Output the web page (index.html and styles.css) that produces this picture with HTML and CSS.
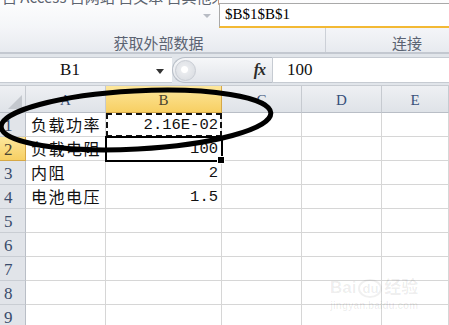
FILE: index.html
```html
<!DOCTYPE html>
<html>
  <head>
    <link rel="stylesheet" href="styles.css">
  </head>
  <body>
    <div class="ribbon">
      <div class="rb-top">
        <div class="rb-left">
          <div class="cut">自 Access 自网站 自文本 自其他来源</div>
          <span class="more"></span>
        </div>
        <div class="refbox">$B$1$B$1</div>
      </div>
      <div class="rb-groups">
        <div class="grp g1">获取外部数据</div>
        <div class="grp g2">连接</div>
      </div>
    </div>

    <div class="fbar">
      <div class="namebox"><span>B1</span><i class="caret"></i></div>
      <div class="fxbtn"><span class="knob"></span><span class="fx">fx</span></div>
      <div class="finput">100</div>
    </div>

    <div class="sheet">
      <div class="hd corner"><i></i></div>
      <div class="hd">A</div>
      <div class="hd sel">B</div>
      <div class="hd">C</div>
      <div class="hd">D</div>
      <div class="hd">E</div>

      <div class="rh">1</div>
      <div class="c txt">负载功率</div>
      <div class="c num ants">2.16E-02</div>
      <div class="c"></div><div class="c"></div><div class="c"></div>

      <div class="rh sel">2</div>
      <div class="c txt">负载电阻</div>
      <div class="c num active">100</div>
      <div class="c"></div><div class="c"></div><div class="c"></div>

      <div class="rh">3</div>
      <div class="c txt">内阻</div>
      <div class="c num">2</div>
      <div class="c"></div><div class="c"></div><div class="c"></div>

      <div class="rh">4</div>
      <div class="c txt">电池电压</div>
      <div class="c num">1.5</div>
      <div class="c"></div><div class="c"></div><div class="c"></div>

      <div class="rh">5</div>
      <div class="c"></div><div class="c"></div><div class="c"></div><div class="c"></div><div class="c"></div>
      <div class="rh">6</div>
      <div class="c"></div><div class="c"></div><div class="c"></div><div class="c"></div><div class="c"></div>
      <div class="rh">7</div>
      <div class="c"></div><div class="c"></div><div class="c"></div><div class="c"></div><div class="c"></div>
      <div class="rh">8</div>
      <div class="c"></div><div class="c"></div><div class="c"></div><div class="c"></div><div class="c"></div>
      <div class="rh">9</div>
      <div class="c"></div><div class="c"></div><div class="c"></div><div class="c"></div><div class="c"></div>
    </div>

    <!-- hand drawn circle over the sheet -->
    <svg class="ink" width="449" height="325" viewBox="0 0 449 325">
      <ellipse cx="136" cy="120" rx="135" ry="29" transform="rotate(-3 136 120)"
        fill="none" stroke="#000" stroke-width="5"/>
    </svg>

    <div class="wm">
      <div class="wm-logo">Bai<span class="paw">du</span>经验</div>
      <div class="wm-url">jingyan.baidu.com</div>
    </div>
  </body>
</html>
```

FILE: styles.css
```css
* {
  margin: 0;
  padding: 0;
  box-sizing: border-box;
}
html, body {
  width: 449px;
  height: 325px;
  overflow: hidden;
}
body {
  position: relative;
  background-color: #fff;
  font-family: "Liberation Serif", "Noto Sans CJK SC", serif;
}

/* ribbon */
.ribbon {
  background: linear-gradient(#fdfdfe, #eceff3);
  border-bottom: 2px solid #c3c8d0;
}
.rb-top {
  display: flex;
  height: 28px;
}
.rb-left {
  width: 219px;
  position: relative;
  overflow: hidden;
}
.cut {
  margin-top: -12px;
  padding-left: 2px;
  font-family: "Noto Sans CJK SC", sans-serif;
  font-size: 15px;
  line-height: 18px;
  color: #5d6470;
  white-space: nowrap;
}
.more {
  position: absolute;
  left: 203px;
  top: 14px;
  border-left: 4px solid transparent;
  border-right: 4px solid transparent;
  border-top: 4px solid #b8bcc4;
}
.refbox {
  flex: 1;
  margin-top: 3px;
  background-color: #fff;
  border-top: 1px solid #a9a9a9;
  border-left: 1px solid #a9a9a9;
  border-bottom: 2px solid #f3b934;
  padding-left: 5px;
  font-size: 15px;
  line-height: 21px;
  color: #000;
}
.rb-groups {
  display: flex;
  height: 24px;
  background: linear-gradient(#f4f5f8, #e7eaef);
}
.grp {
  font-family: "Noto Sans CJK SC", sans-serif;
  font-size: 15px;
  line-height: 24px;
  color: #5b6372;
  padding-top: 3px;
}
.g1 {
  width: 326px;
  text-align: center;
  padding-right: 8px;
  border-right: 1px solid #ccd0d7;
}
.g2 {
  flex: 1;
  padding-left: 66px;
}

/* formula bar */
.fbar {
  display: flex;
  height: 31px;
  padding: 3px 0 2px;
  background-color: #e1e5ea;
}
.namebox {
  width: 172px;
  background-color: #fff;
  border-top: 1px solid #c6cbd2;
  border-bottom: 1px solid #c6cbd2;
  display: flex;
  align-items: center;
  position: relative;
}
.namebox span {
  width: 140px;
  text-align: center;
  font-size: 17px;
  color: #111;
}
.caret {
  position: absolute;
  left: 156px;
  top: 11px;
  border-left: 4px solid transparent;
  border-right: 4px solid transparent;
  border-top: 5px solid #333;
}
.fxbtn {
  width: 101px;
  display: flex;
  align-items: center;
  justify-content: space-between;
  background: linear-gradient(#f6f7f9, #e2e5ea);
  border: 1px solid #b7bdc6;
  border-right-color: #c6cbd2;
  border-radius: 13px 0 0 13px;
  padding: 0 7px 0 2px;
}
.knob {
  width: 21px;
  height: 21px;
  border-radius: 50%;
  background: radial-gradient(circle at 45% 45%, #fff 0, #fff 3px, #e9ebee 4px, #dcdfe4 11px);
  border: 1px solid #c8ccd3;
}
.fx {
  font-style: italic;
  font-weight: bold;
  font-size: 16px;
  color: #2b2b2b;
  letter-spacing: -1px;
}
.finput {
  flex: 1;
  background-color: #fff;
  border-top: 1px solid #c6cbd2;
  border-bottom: 1px solid #c6cbd2;
  padding-left: 14px;
  font-size: 17px;
  line-height: 24px;
  color: #111;
}

/* sheet */
.sheet {
  display: grid;
  grid-template-columns: 26px 80px 116px 80px 80px 1fr;
  grid-template-rows: 27px;
  grid-auto-rows: 24px;
  border-top: 1px solid #c8ccd2;
}
.hd {
  background: linear-gradient(#eef0f3, #dfe3e8);
  border-right: 1px solid #c6cad0;
  border-bottom: 1px solid #b9bec6;
  text-align: center;
  font-size: 15px;
  line-height: 28px;
  color: #38507a;
}
.corner {
  position: relative;
}
.corner i {
  position: absolute;
  right: 3px;
  bottom: 3px;
  border-left: 14px solid transparent;
  border-bottom: 14px solid #c4c8ce;
}
.hd.sel, .rh.sel {
  background: linear-gradient(#fde79c, #f7cf63);
  border-color: #d6a847;
  color: #4a4430;
}
.rh {
  background-color: #e1e4e9;
  border-right: 1px solid #b9bec6;
  border-bottom: 1px solid #c9cdd3;
  padding-left: 4px;
  font-size: 17px;
  line-height: 25px;
  color: #3a4c6c;
}
.c {
  border-right: 1px solid #d6d6d6;
  border-bottom: 1px solid #d6d6d6;
  font-size: 17px;
  line-height: 24px;
  color: #111;
  white-space: nowrap;
}
.txt {
  padding-left: 5px;
  font-family: "Noto Sans CJK SC", sans-serif;
  font-size: 16px;
  letter-spacing: 1.5px;
  line-height: 23px;
}
.num {
  text-align: right;
  padding-right: 3px;
  font-family: "Liberation Mono", monospace;
  font-size: 15.5px;
}
.ants {
  outline: 2px dashed #111;
  outline-offset: -2px;
}
.active {
  position: relative;
  outline: 2px solid #000;
  outline-offset: -1px;
}
.active::after {
  content: "";
  position: absolute;
  right: -4px;
  bottom: -4px;
  width: 6px;
  height: 6px;
  background-color: #000;
  border: 1px solid #fff;
}

.ink {
  position: absolute;
  left: 0;
  top: 0;
  pointer-events: none;
}

/* watermark */
.wm {
  position: absolute;
  left: 330px;
  top: 278px;
  color: rgba(0, 0, 0, 0.07);
  font-family: "Liberation Sans", "Noto Sans CJK SC", sans-serif;
  font-weight: bold;
  text-align: center;
}
.wm-logo {
  font-size: 17px;
  line-height: 20px;
}
.paw {
  display: inline-block;
  border: 2px solid rgba(0, 0, 0, 0.06);
  border-radius: 50%;
  padding: 0 2px;
  font-size: 13px;
  line-height: 15px;
  margin: 0 2px;
}
.wm-url {
  font-size: 10px;
  line-height: 16px;
}
```
